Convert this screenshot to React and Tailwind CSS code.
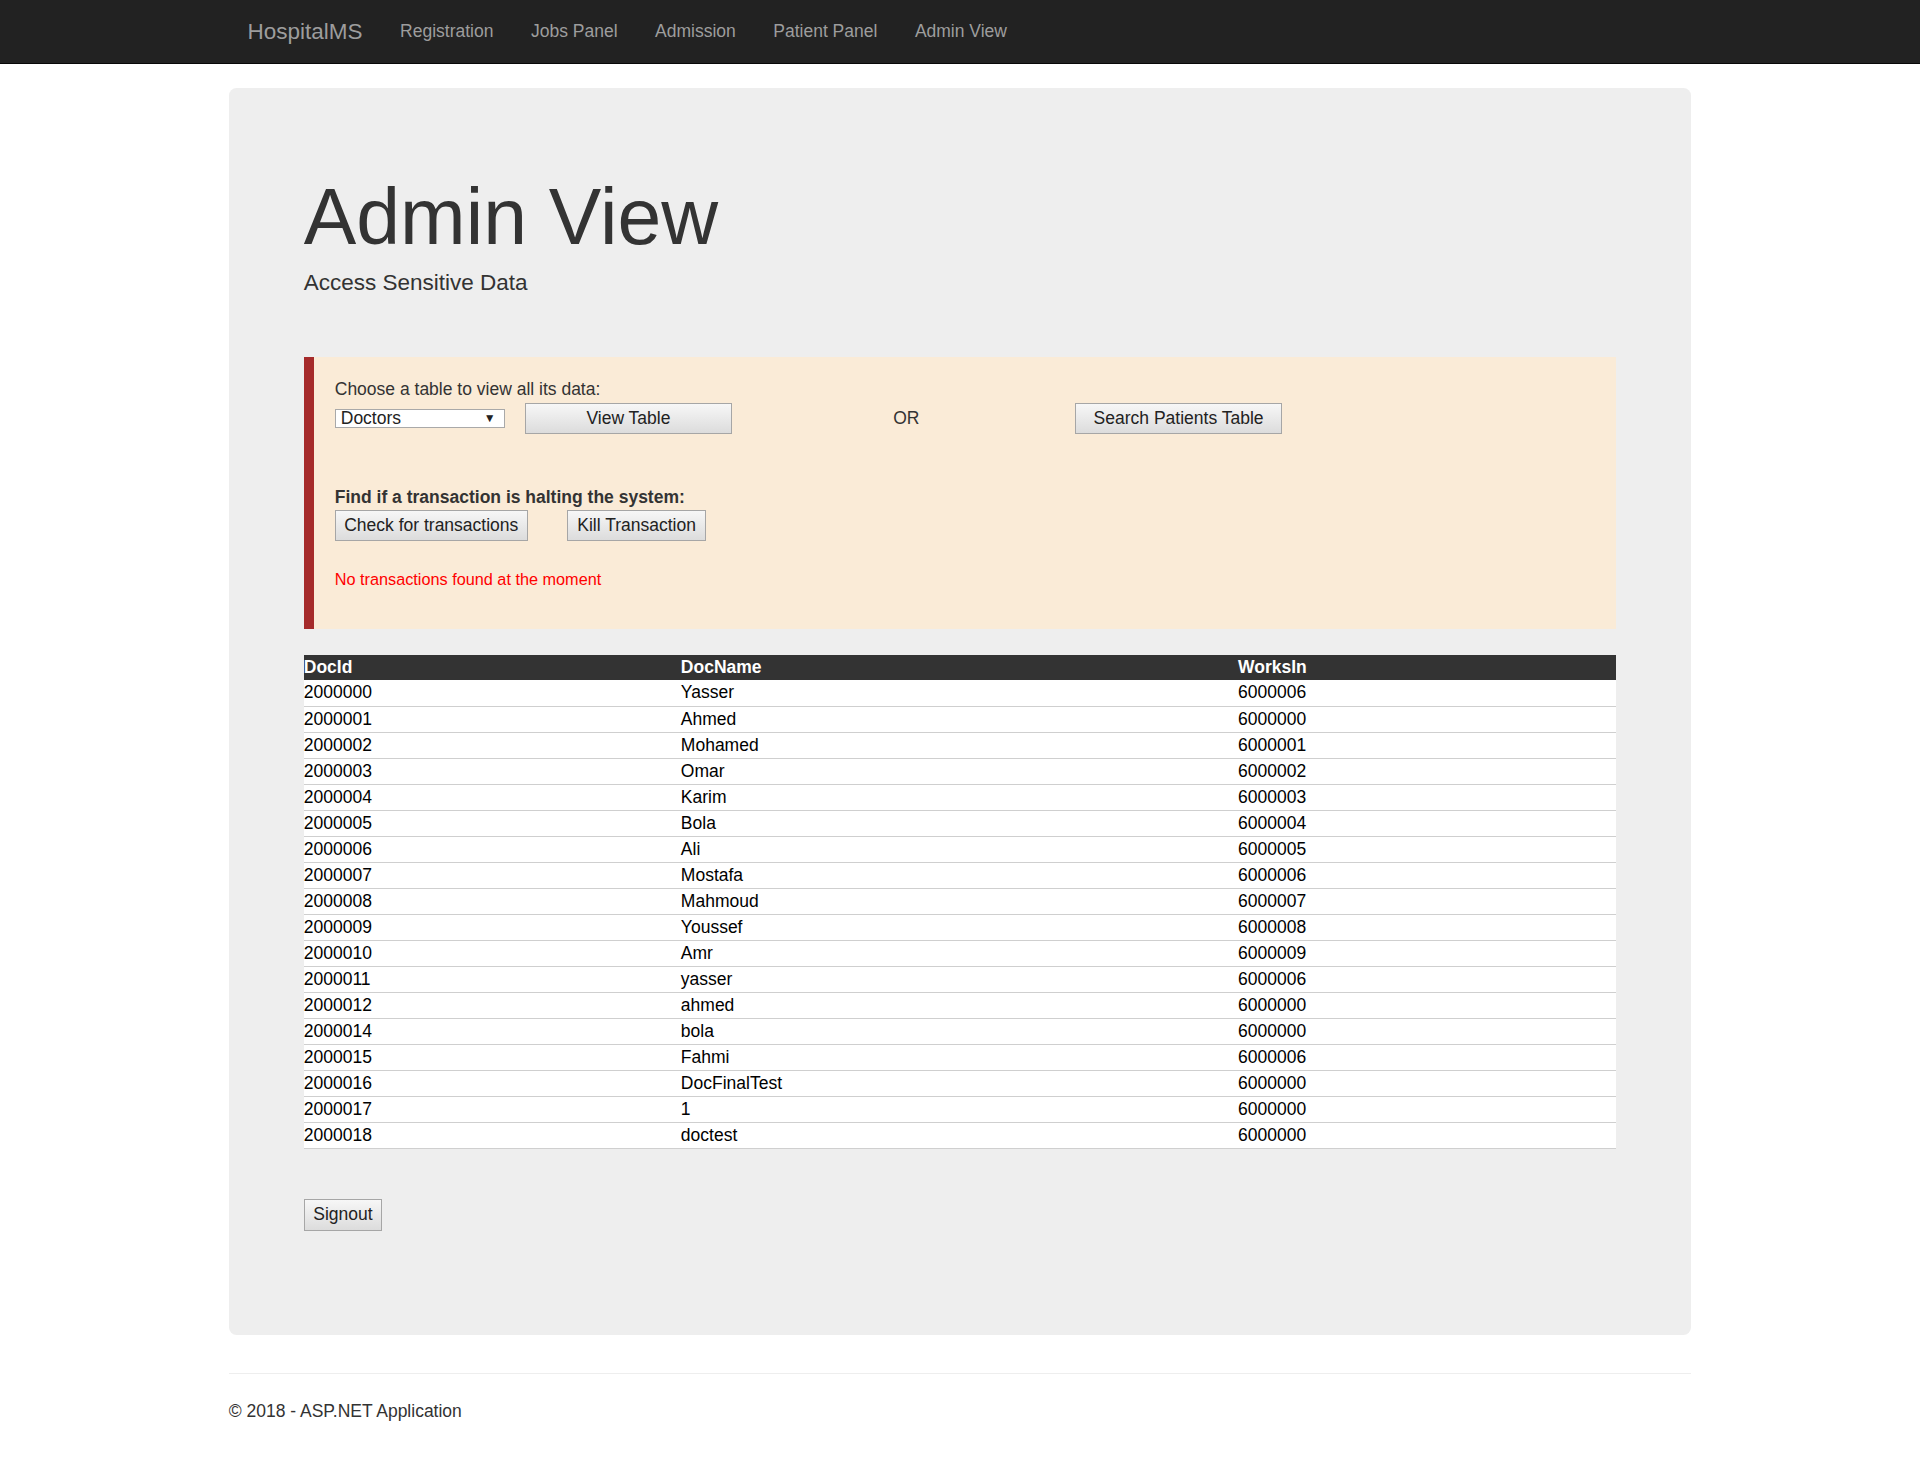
import { useState } from 'react';

const navLinks = ['Registration', 'Jobs Panel', 'Admission', 'Patient Panel', 'Admin View'];

const doctors = [
  ['2000000', 'Yasser', '6000006'],
  ['2000001', 'Ahmed', '6000000'],
  ['2000002', 'Mohamed', '6000001'],
  ['2000003', 'Omar', '6000002'],
  ['2000004', 'Karim', '6000003'],
  ['2000005', 'Bola', '6000004'],
  ['2000006', 'Ali', '6000005'],
  ['2000007', 'Mostafa', '6000006'],
  ['2000008', 'Mahmoud', '6000007'],
  ['2000009', 'Youssef', '6000008'],
  ['2000010', 'Amr', '6000009'],
  ['2000011', 'yasser', '6000006'],
  ['2000012', 'ahmed', '6000000'],
  ['2000014', 'bola', '6000000'],
  ['2000015', 'Fahmi', '6000006'],
  ['2000016', 'DocFinalTest', '6000000'],
  ['2000017', '1', '6000000'],
  ['2000018', 'doctest', '6000000'],
];

// classic browser-default push button look
const btn =
  'h-[31px] border border-[#a6a6a6] bg-gradient-to-b from-[#f7f7f7] to-[#dcdcdc] text-[17.5px] leading-none text-[#222] text-center';

export default function App() {
  const [table, setTable] = useState('Doctors');

  return (
    <div className="min-h-[1462px] bg-white font-['Liberation_Sans',Arial,sans-serif] text-[17.5px] leading-[25px] text-[#333]">
      {/* Navbar */}
      <nav className="h-[63.75px] bg-[#222] border-b-[1.25px] border-[#080808]">
        <div className="w-[1462.5px] mx-auto px-[18.75px] flex">
          <a className="-ml-[18.75px] p-[18.75px] text-[22.5px] leading-[25px] text-[#9d9d9d]">HospitalMS</a>
          <ul className="flex">
            {navLinks.map((l) => (
              <li key={l}>
                <a className="block px-[18.75px] py-[18.75px] leading-[25px] text-[#9d9d9d]">{l}</a>
              </li>
            ))}
          </ul>
        </div>
      </nav>

      <div className="w-[1462.5px] mx-auto">
        {/* Jumbotron */}
        <div className="mt-[24.25px] rounded-[7.5px] bg-[#eee] px-[75px] pt-[60px] pb-[104px]">
          <h1 className="mt-[25.7px] text-[78.75px] leading-[86.6px] font-normal">Admin View</h1>
          <div className="mt-[9.3px] text-[22.5px] leading-[25px]">Access Sensitive Data</div>

          {/* Control box */}
          <div className="mt-[62.9px] border-l-[10px] border-[#a52a2a] bg-[#faebd7] pl-[21px] pt-[20px] pb-[37.1px]">
            <div>Choose a table to view all its data:</div>
            <div className="flex items-center h-[31px] mt-[0.6px]">
              <label className="relative flex items-center w-[170px] h-[19.3px] border border-[#a9a9a9] bg-white pl-[5px] text-[17.5px] leading-[17px] text-[#222]">
                {table}
                <span className="absolute right-[8px] top-[0px] text-[12px] leading-[16px]">▼</span>
                <select
                  value={table}
                  onChange={(e) => setTable(e.target.value)}
                  className="absolute inset-0 opacity-0"
                >
                  <option>Doctors</option>
                  <option>Patients</option>
                  <option>Nurses</option>
                </select>
              </label>
              <button className={`${btn} ml-[20px] w-[207.4px]`}>View Table</button>
              <span className="ml-[161px] text-[17.5px]">OR</span>
              <button className={`${btn} ml-[155.7px] w-[207px]`}>Search Patients Table</button>
            </div>

            <div className="mt-[50.7px] font-bold">Find if a transaction is halting the system:</div>
            <div className="flex h-[31.6px] mt-[0.7px]">
              <button className={`${btn} h-[31.6px] w-[193px]`}>Check for transactions</button>
              <button className={`${btn} h-[31.6px] ml-[39.7px] w-[138.4px]`}>Kill Transaction</button>
            </div>
            <div className="mt-[25px] text-[#ff0000] text-[16.25px]">No transactions found at the moment</div>
          </div>

          {/* Data table */}
          <table className="mt-[26px] w-full table-fixed border-collapse text-black">
            <colgroup>
              <col className="w-[377.1px]" />
              <col className="w-[557.2px]" />
              <col />
            </colgroup>
            <thead>
              <tr className="h-[25px] bg-[#333] text-white text-left">
                <th className="p-0 font-bold">DocId</th>
                <th className="p-0 font-bold">DocName</th>
                <th className="p-0 font-bold">WorksIn</th>
              </tr>
            </thead>
            <tbody>
              {doctors.map(([id, name, works]) => (
                <tr key={id} className="h-[26px] bg-white border-b border-[#cfcfcf]">
                  <td className="p-0">{id}</td>
                  <td className="p-0">{name}</td>
                  <td className="p-0">{works}</td>
                </tr>
              ))}
            </tbody>
          </table>

          <button className={`${btn} mt-[50.3px] h-[32.4px] w-[78.4px] block`}>Signout</button>
        </div>

        <hr className="mt-[37.5px] border-0 border-t border-[#eee]" />
        <footer className="mt-[25px]">
          <p>© 2018 - ASP.NET Application</p>
        </footer>
      </div>
    </div>
  );
}
